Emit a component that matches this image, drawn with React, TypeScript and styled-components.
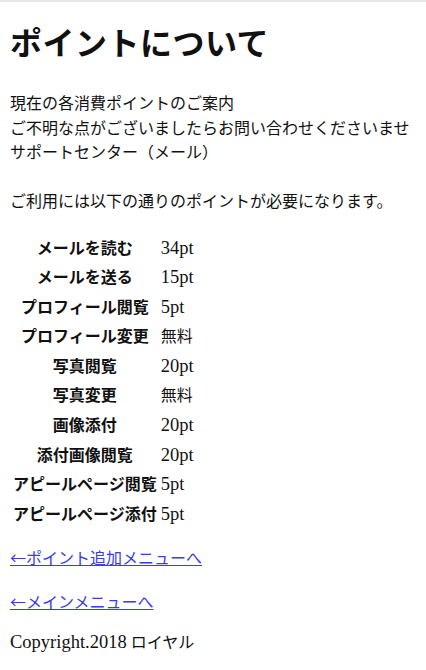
import React from "react";
import styled, { createGlobalStyle } from "styled-components";

const Global = createGlobalStyle`
  html, body { margin: 0; padding: 0; background: #fff; }
  body {
    font-family: "Liberation Serif", "Noto Sans CJK JP", serif;
    color: #111;
    font-size: 16px;
  }
`;

const Page = styled.div`
  border-top: 2px solid #e6e6e6;
  padding: 0 10px 20px 10px;
`;

const Title = styled.h1`
  font-size: 32px;
  font-weight: 700;
  line-height: 40px;
  margin: 22px 0 28px 0;
  letter-spacing: 0.5px;
`;

const Paragraph = styled.p`
  margin: 0;
  line-height: 24.5px;
`;

const Spacer = styled.div`
  height: 24.5px;
`;

const PriceTable = styled.table`
  border-spacing: 2px;
  margin: 18px 0 15px 0;
`;

const Label = styled.th`
  font-weight: 700;
  text-align: center;
  padding: 2px 1px;
  line-height: 23.6px;
  white-space: nowrap;
`;

const Value = styled.td`
  text-align: left;
  padding: 2px 1px 2px 1px;
  line-height: 23.6px;
`;

const Latin = styled.span`
  font-family: "Liberation Serif", serif;
  font-size: 18.5px;
`;

const LinkLine = styled.p<{ $after: number }>`
  margin: 0 0 ${(p) => p.$after}px 0;
  line-height: 24px;
`;

const NavLink = styled.a`
  font-family: "Noto Sans CJK JP", sans-serif;
  color: #3a3aee;
  text-decoration: underline;
`;

const Footer = styled.p`
  margin: 0;
  line-height: 24px;
`;

const rows: [string, string][] = [
  ["メールを読む", "34pt"],
  ["メールを送る", "15pt"],
  ["プロフィール閲覧", "5pt"],
  ["プロフィール変更", "無料"],
  ["写真閲覧", "20pt"],
  ["写真変更", "無料"],
  ["画像添付", "20pt"],
  ["添付画像閲覧", "20pt"],
  ["アピールページ閲覧", "5pt"],
  ["アピールページ添付", "5pt"],
];

export default function App() {
  return (
    <>
      <Global />
      <Page>
        <Title>ポイントについて</Title>
        <Paragraph>現在の各消費ポイントのご案内</Paragraph>
        <Paragraph>ご不明な点がございましたらお問い合わせくださいませ</Paragraph>
        <Paragraph>サポートセンター（メール）</Paragraph>
        <Spacer />
        <Paragraph>ご利用には以下の通りのポイントが必要になります。</Paragraph>
        <PriceTable>
          <tbody>
            {rows.map(([k, v]) => (
              <tr key={k}>
                <Label>{k}</Label>
                <Value>{/pt$/.test(v) ? <Latin>{v}</Latin> : v}</Value>
              </tr>
            ))}
          </tbody>
        </PriceTable>
        <LinkLine $after={18}>
          <NavLink href="#">←ポイント追加メニューへ</NavLink>
        </LinkLine>
        <LinkLine $after={15}>
          <NavLink href="#">←メインメニューへ</NavLink>
        </LinkLine>
        <Footer>
          <Latin>Copyright.2018</Latin> ロイヤル
        </Footer>
      </Page>
    </>
  );
}
